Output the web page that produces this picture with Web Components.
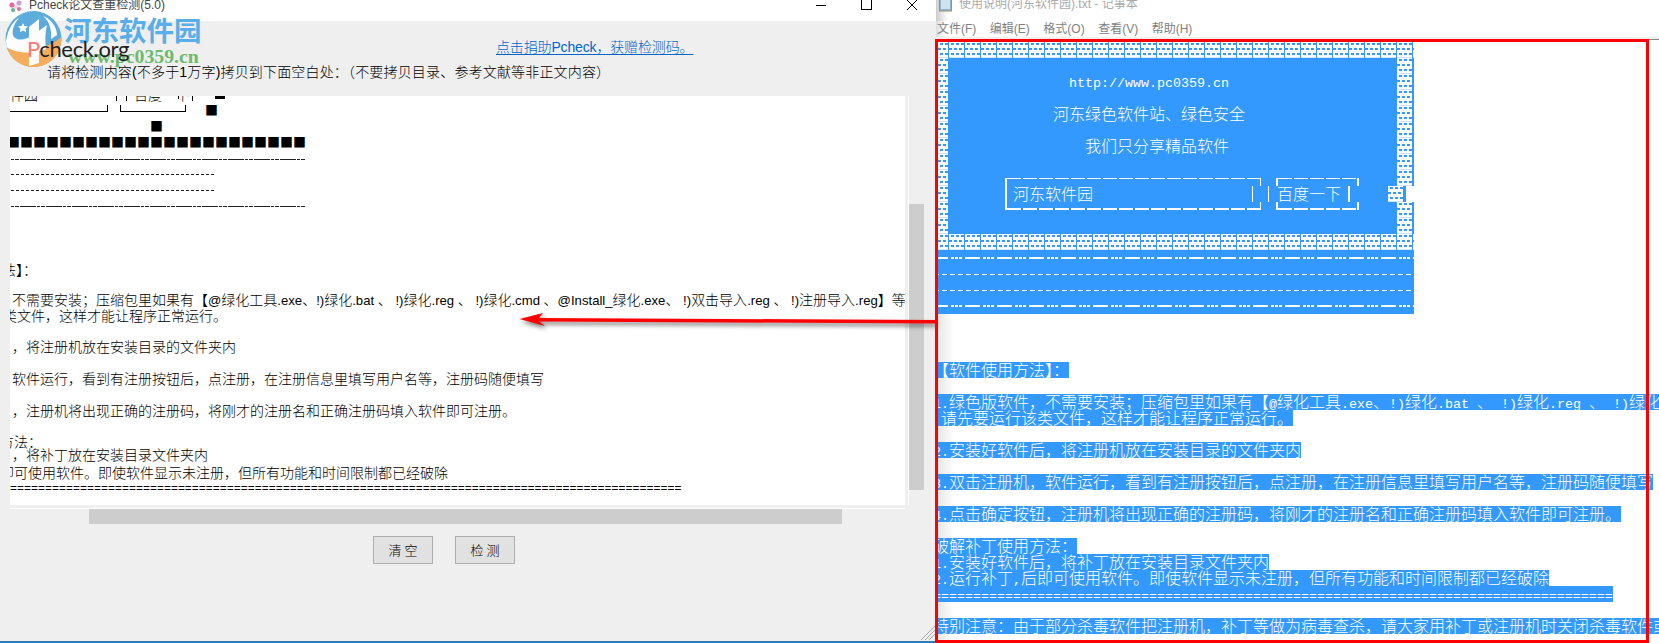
<!DOCTYPE html>
<html lang="zh"><head><meta charset="utf-8"><title>Pcheck</title>
<style>html,body{margin:0;padding:0;background:#fff;overflow:hidden}</style></head>
<body>
<desk-app></desk-app>
<script>
const SANS='"Liberation Sans","Noto Sans CJK SC",sans-serif';
const CJK='"Noto Sans CJK SC",sans-serif';
function el(name,html){customElements.define(name,class extends HTMLElement{constructor(){super();this.attachShadow({mode:'open'}).innerHTML=html}})}

el('dot-cell',`<style>:host{display:block;width:16px;height:16px;flex:none;white-space:normal}svg{display:block}</style><svg width="16" height="16" shape-rendering="crispEdges"><rect width="15" height="16" fill="#fff"/>${
 [[1,2],[6,0],[11,2]].map(([y,o])=>[0,1,2].map(i=>`<rect x="${o+i*5}" y="${y}" width="3" height="2" fill="#39f"/>`).join('')).join('')}<rect x="0" y="15" width="15" height="1" fill="#cfe6ff"/></svg>`);

customElements.define('np-line',class extends HTMLElement{
 constructor(){super();this.attachShadow({mode:'open'})}
 connectedCallback(){
  const t=this.textContent;
  const esc=s=>s.replace(/&/g,'&amp;').replace(/</g,'&lt;');
  const body=t.split(/([\x20-\x7e]+)/).map((p,i)=>i%2?`<b>${esc(p)}</b>`:esc(p)).join('');
  this.shadowRoot.innerHTML=`<style>
  :host{display:block;height:16px;overflow:hidden;width:fit-content;white-space:pre;font:300 16px/14px ${CJK};color:#fff;background:#39f}
  b{font:400 13.334px/14px "Liberation Mono",monospace}
  </style>${body}`;
 }
});

el('np-art',`<style>
:host{display:block;width:481px;height:272px;position:relative;background:#39f;color:#fff;overflow:hidden;font:300 16px/14px ${CJK}}
.r{display:flex;height:16px;white-space:pre}
.end{margin-left:auto;margin-right:1px}
.m{font:400 13.334px/16px "Liberation Mono",monospace;padding-top:2px}
.thick{height:16px;background:linear-gradient(90deg,#fff 0 15px,transparent 15px 18px,#fff 18px 21px,transparent 21px 22px,#fff 22px 25px,transparent 25px 26px,#fff 26px 29px,transparent 29px 32px) 0 7px/32px 2px repeat-x}
.thin{height:16px;background:linear-gradient(90deg,#fff 0 5px,transparent 5px 8px) 1px 8px/8px 1px repeat-x}
svg.box{position:absolute;left:0;top:0}
.w{width:8px;height:16px;background:#fff;flex:none;margin-left:2px}
</style>
<div class="r">${'<dot-cell></dot-cell>'.repeat(31)}</div>
<div class="r"><dot-cell></dot-cell><dot-cell class="end"></dot-cell></div>
<div class="r"><dot-cell></dot-cell><span class="m" style="margin-left:120px">http://www.pc0359.cn</span><dot-cell class="end"></dot-cell></div>
<div class="r"><dot-cell></dot-cell><dot-cell class="end"></dot-cell></div>
<div class="r"><dot-cell></dot-cell><span style="margin-left:104px">河东绿色软件站、绿色安全</span><dot-cell class="end"></dot-cell></div>
<div class="r"><dot-cell></dot-cell><dot-cell class="end"></dot-cell></div>
<div class="r"><dot-cell></dot-cell><span style="margin-left:136px">我们只分享精品软件</span><dot-cell class="end"></dot-cell></div>
<div class="r"><dot-cell></dot-cell><dot-cell class="end"></dot-cell></div>
<div class="r"><dot-cell></dot-cell><dot-cell class="end"></dot-cell></div>
<div class="r"><dot-cell></dot-cell><span style="margin-left:64px">河东软件园</span><span style="margin-left:184px">百度一下</span><dot-cell style="margin-left:auto"></dot-cell><div class="w"></div></div>
<div class="r"><dot-cell></dot-cell><dot-cell class="end"></dot-cell></div>
<div class="r"><dot-cell></dot-cell><dot-cell class="end"></dot-cell></div>
<div class="r">${'<dot-cell></dot-cell>'.repeat(31)}</div>
<div class="thick"></div><div class="thin"></div><div class="thin"></div><div class="thick"></div>
<svg class="box" width="481" height="272" fill="#fff" shape-rendering="crispEdges">
<path d="M74 136H328" stroke="#fff" stroke-dasharray="14 2" fill="none"/>
<path d="M345 136H426" stroke="#fff" stroke-dasharray="14 2" fill="none"/>
<path d="M74 167H328M345 167H426" stroke="#fff" stroke-width="2" stroke-dasharray="14 2" fill="none"/>
<rect x="72" y="136" width="2" height="32"/>
<rect x="327" y="136" width="1" height="8"/><rect x="327" y="160" width="1" height="8"/>
<rect x="319" y="144" width="1" height="16"/><rect x="335" y="144" width="1" height="16"/>
<rect x="343" y="136" width="2" height="8"/><rect x="343" y="160" width="2" height="8"/>
<rect x="424" y="136" width="2" height="8"/><rect x="424" y="160" width="2" height="8"/>
<rect x="415" y="144" width="2" height="16"/>
</svg>`);

el('notepad-window',`<style>
:host{display:block;width:723px;height:643px;background:#fff;overflow:hidden;flex:none}
.title{height:21px;display:flex;font:12px/12px ${SANS};color:#aaa;background:linear-gradient(90deg,#ccc,#fff 12px)}
.title svg{margin-left:2px;flex:none}
.title span{margin-left:5px;margin-top:-2px;white-space:pre}
.menu{height:16px;display:flex;gap:13.5px;padding-left:1px;font:12px/16px ${SANS};color:#7f7f7f;background:linear-gradient(90deg,#ddd,#fff 10px)}
.rule{height:2px;background:#f0f0f0}
.doc{height:604px;padding-top:2px;border-top:1px solid #888;margin-top:0;box-sizing:border-box;padding-left:2px;background:linear-gradient(90deg,#e4e4e4,#fff 18px)}
.clip{overflow:hidden;height:601px}
.in{margin-left:-5px}
.sp{height:16px}
</style>
<div class="title"><svg width="16" height="14"><rect x="1.500" y="-3" width="12" height="14" fill="#8fb6cf" stroke="#9d8f70"/><rect x="3" y="-3" width="9" height="12" fill="#cfe3ee"/></svg><span>使用说明(河东软件园).txt - 记事本</span></div>
<div class="menu"><span>文件(F)</span><span>编辑(E)</span><span>格式(O)</span><span>查看(V)</span><span>帮助(H)</span></div>
<div class="rule"></div>
<div class="doc"><div class="clip"><div class="in">
<np-art></np-art>
<div class="sp" style="height:48px"></div>
<np-line>【软件使用方法】：</np-line><div class="sp"></div>
<np-line>1.绿色版软件，不需要安装；压缩包里如果有【@绿化工具.exe、!)绿化.bat 、 !)绿化.reg 、 !)绿化.cmd 、@Install_绿化.exe</np-line>
<np-line> 请先要运行该类文件，这样才能让程序正常运行。</np-line><div class="sp"></div>
<np-line>2.安装好软件后，将注册机放在安装目录的文件夹内</np-line><div class="sp"></div>
<np-line>3.双击注册机，软件运行，看到有注册按钮后，点注册，在注册信息里填写用户名等，注册码随便填写</np-line><div class="sp"></div>
<np-line>4.点击确定按钮，注册机将出现正确的注册码，将刚才的注册名和正确注册码填入软件即可注册。</np-line><div class="sp"></div>
<np-line>破解补丁使用方法：</np-line>
<np-line>1.安装好软件后，将补丁放在安装目录文件夹内</np-line>
<np-line>2.运行补丁,后即可使用软件。即使软件显示未注册，但所有功能和时间限制都已经破除</np-line>
<np-line>${'='.repeat(85)}</np-line><div class="sp"></div>
<np-line>特别注意：由于部分杀毒软件把注册机，补丁等做为病毒查杀，请大家用补丁或注册机时关闭杀毒软件或</np-line>
</div></div></div>`);

el('pc-text',`<style>
:host{display:block;width:895px;height:409px;background:#fff;overflow:hidden;position:relative;color:#000;font:300 14px/16px ${SANS}}
.r{height:16px;white-space:pre;display:flex}
.q{display:block;width:13px;text-align:center;flex:none;font:400 13px/16px ${CJK}}
.thick{height:16px;background:linear-gradient(90deg,#222 0 3px,transparent 3px 4px,#222 4px 8px,transparent 8px 9.5px,#222 9.5px 25px,transparent 25px 26px) 1px 9px/26px 1px repeat-x;width:296px}
.thin{height:16px;background:linear-gradient(90deg,#222 0 3px,transparent 3px 5px) 1px 8px/5px 1px repeat-x;width:205px}
.e{font:400 11.667px/16px "Liberation Mono",monospace}
b{font-weight:400;font-size:13.15px}
svg{position:absolute;left:0;top:0}
</style>
<div class="r" style="margin-top:-9px"><span>件园</span><span style="margin-left:96px">百度一下</span></div>
<div class="r" style="margin-top:-1px"><span class="q" style="margin-left:195px">■</span></div>
<div class="r"><span class="q" style="margin-left:140px">■</span></div>
<div class="r"><span class="q" style="margin-left:-3px">■</span>${'<span class="q">■</span>'.repeat(22)}</div>
<div class="thick"></div><div class="thin"></div><div class="thin"></div><div class="thick" style="background-position:1px 8px"></div>
<div class="r" style="margin-top:48px;margin-left:-8px">法】：</div>
<div class="r" style="margin-top:14px;margin-left:2px;display:block">不需要安装；压缩包里如果有【<b>@</b>绿化工具<b>.exe</b>、<b>!)</b>绿化<b>.bat </b>、<b> !)</b>绿化<b>.reg </b>、<b> !)</b>绿化<b>.cmd </b>、<b>@Install_</b>绿化<b>.exe</b>、<b> !)</b>双击导入<b>.reg </b>、<b> !)</b>注册导入<b>.reg</b>】等</div>
<div class="r" style="margin-left:-7px">类文件，这样才能让程序正常运行。</div>
<div class="r" style="margin-top:15px;margin-left:2px">，将注册机放在安装目录的文件夹内</div>
<div class="r" style="margin-top:16px;margin-left:2px">软件运行，看到有注册按钮后，点注册，在注册信息里填写用户名等，注册码随便填写</div>
<div class="r" style="margin-top:16px;margin-left:2px">，注册机将出现正确的注册码，将刚才的注册名和正确注册码填入软件即可注册。</div>
<div class="r" style="margin-top:15px;margin-left:-10px">方法：</div>
<div class="r" style="margin-top:-3px;margin-left:2px">，将补丁放在安装目录文件夹内</div>
<div class="r" style="margin-top:2px;margin-left:-10px">即可使用软件。即使软件显示未注册，但所有功能和时间限制都已经破除</div>
<div class="r e">${'='.repeat(96)}</div>
<svg width="400" height="40" fill="none" stroke="#000" shape-rendering="crispEdges">
<path d="M0 15.500H98M97.500 9V15.500M110.500 9V15.500H175.500V9M106.500 0V5M116.500 0V5M182.500 0V5M168.500 0V3"/>
<rect x="205" y="0" width="10" height="3" fill="#000" stroke="none"/>
</svg>`);

el('water-mark',`<style>
:host{display:block;position:absolute;left:5px;top:11px;width:200px;height:56px}
svg{display:block;position:absolute;left:0;top:0;opacity:.92}
.a{position:absolute;left:59px;top:0;font:700 27.500px/36px ${CJK};color:#59ade9;white-space:pre}
.b{position:absolute;left:63px;top:34px;font:700 19.800px/22px "Liberation Serif",serif;color:#6cbb6c;white-space:pre}
</style>
<svg width="58" height="56" viewBox="0 0 58 56">
<circle cx="28.500" cy="28" r="28" fill="#4fa5da"/>
<path d="M1.500 34C14 44 40 40 56.500 26 56 46 43 56 28.500 56 14 56 4 46 1.500 34Z" fill="#f6a851"/>
<path d="M1 30C3 18 8 10 14 7 8 14 6 22 9 26 14 31 22 28 28 24L42 14C40 22 40 30 41 38 32 42 14 44 1.500 36Z" fill="#fff"/>
<path d="M24 16 34 8V52L24 55Z" fill="#fff"/>
<path d="M38 5C46 8 52 16 52 24L46 28C47 18 44 10 38 5Z" fill="#fff"/>
<path d="M18 12l1.500 3 3.500.5-2.500 2.300.6 3.400-3.100-1.600-3.100 1.600.6-3.400L13 15.500l3.500-.5Z" fill="#fff"/>
</svg>
<div class="a">河东软件园</div><div class="b">www.pc0359.cn</div>`);

el('pcheck-window',`<style>
:host{display:block;width:936px;height:643px;flex:none;background:#efefef;overflow:hidden;font:300 14px/16px ${SANS};position:relative}
.title{height:21px;background:#fff;display:flex;font:400 12px/12px ${SANS};color:#444;overflow:hidden}
.title .ic{margin-left:8px;flex:none}
.title span{margin-left:5px;margin-top:-1px;white-space:pre}
.ctl{margin-left:auto;margin-right:19px;flex:none}
.head{height:75px;padding-left:47px;box-sizing:border-box;padding-top:18px}
.link{display:block;margin-left:449px;height:16px;color:#06c;text-decoration:underline;white-space:pre;text-underline-offset:2px;letter-spacing:-.15px}
.ins{margin-top:9px;color:#000;white-space:pre;letter-spacing:.17px}
.main{display:flex;margin-left:10px;height:409px}
.vs{margin-left:3px;border-left:1px solid #fff;height:409px;box-sizing:border-box;width:16px}
.th{margin-top:108px;height:286px;background:#cdcdcd;width:15px}
.wl{height:1px;background:#fff;width:895px;margin:3px 0 0 10px}
.hs{height:15px;width:753px;background:#cdcdcd;margin-left:89px}
.btns{display:flex;gap:22px;margin:12px 0 0 373px}
.btn{width:60px;height:28px;box-sizing:border-box;border:1px solid #adadad;background:#e1e1e1;font:300 13px/26px ${CJK};text-align:center;white-space:pre;color:#000}
.end{position:absolute;left:0;right:0;bottom:0;height:2px;background:#2f7cb8}
.grip{position:absolute;right:0;bottom:2px}
.pc{position:absolute;left:27px;top:35px;font:400 22px/28px Lato,${SANS};letter-spacing:-.35px;color:#222;white-space:pre}
.pc i{font-style:normal;color:#f77}
</style>
<div class="title"><svg class="ic" width="16" height="14"><circle cx="4" cy="5" r="2.600" fill="#e26aa0"/><circle cx="11" cy="3" r="2.600" fill="#c9a0d8"/><circle cx="8" cy="7" r="2" fill="#f4d6e0"/><circle cx="5" cy="10" r="2" fill="#5fb58e"/><circle cx="11" cy="9" r="2" fill="#e26aa0"/></svg><span>Pcheck论文查重检测(5.0)</span>
<svg class="ctl" width="101" height="21" fill="none" stroke="#000"><path d="M0 5.500H10" shape-rendering="crispEdges"/><rect x="45.500" y="-1.500" width="10" height="11" shape-rendering="crispEdges"/><path d="M91 0 101 10M101 0 91 10"/></svg></div>
<div class="head"><span class="link">点击捐助Pcheck，获赠检测码。</span><div class="ins">请将检测内容(不多于1万字)拷贝到下面空白处：（不要拷贝目录、参考文献等非正文内容）</div></div>
<div class="main"><pc-text></pc-text><div class="vs"><div class="th"></div></div></div>
<div class="wl"></div><div class="hs"></div>
<div class="btns"><div class="btn">清 空</div><div class="btn">检 测</div></div>
<water-mark></water-mark>
<div class="pc"><i>P</i>check.org</div>
<svg class="grip" width="16" height="16" stroke="#aaa"><path d="M15 1 1 15M15 5 5 15M15 9 9 15"/></svg>
<div class="end"></div>`);

el('red-frame',`<style>:host{display:block;position:absolute;left:935px;top:39px;width:714px;height:604px;box-sizing:border-box;border:3px solid #f00;pointer-events:none}</style>`);

el('red-arrow',`<style>:host{display:block;position:absolute;left:510px;top:305px;width:430px;height:30px;pointer-events:none}svg{display:block;overflow:visible}</style>
<svg width="430" height="30"><g style="filter:drop-shadow(2px 3px 2px rgba(0,0,0,.5))" fill="#f00">
<path d="M9.500 14 33 8 29 13 425 15V18.500L29 16.500 35 21Z"/></g></svg>`);

el('desk-app',`<style>:host{display:flex;width:1659px;height:643px;position:relative;overflow:hidden}</style>
<pcheck-window></pcheck-window><notepad-window></notepad-window>
<red-arrow></red-arrow><red-frame></red-frame>`);
</script>
</body></html>
